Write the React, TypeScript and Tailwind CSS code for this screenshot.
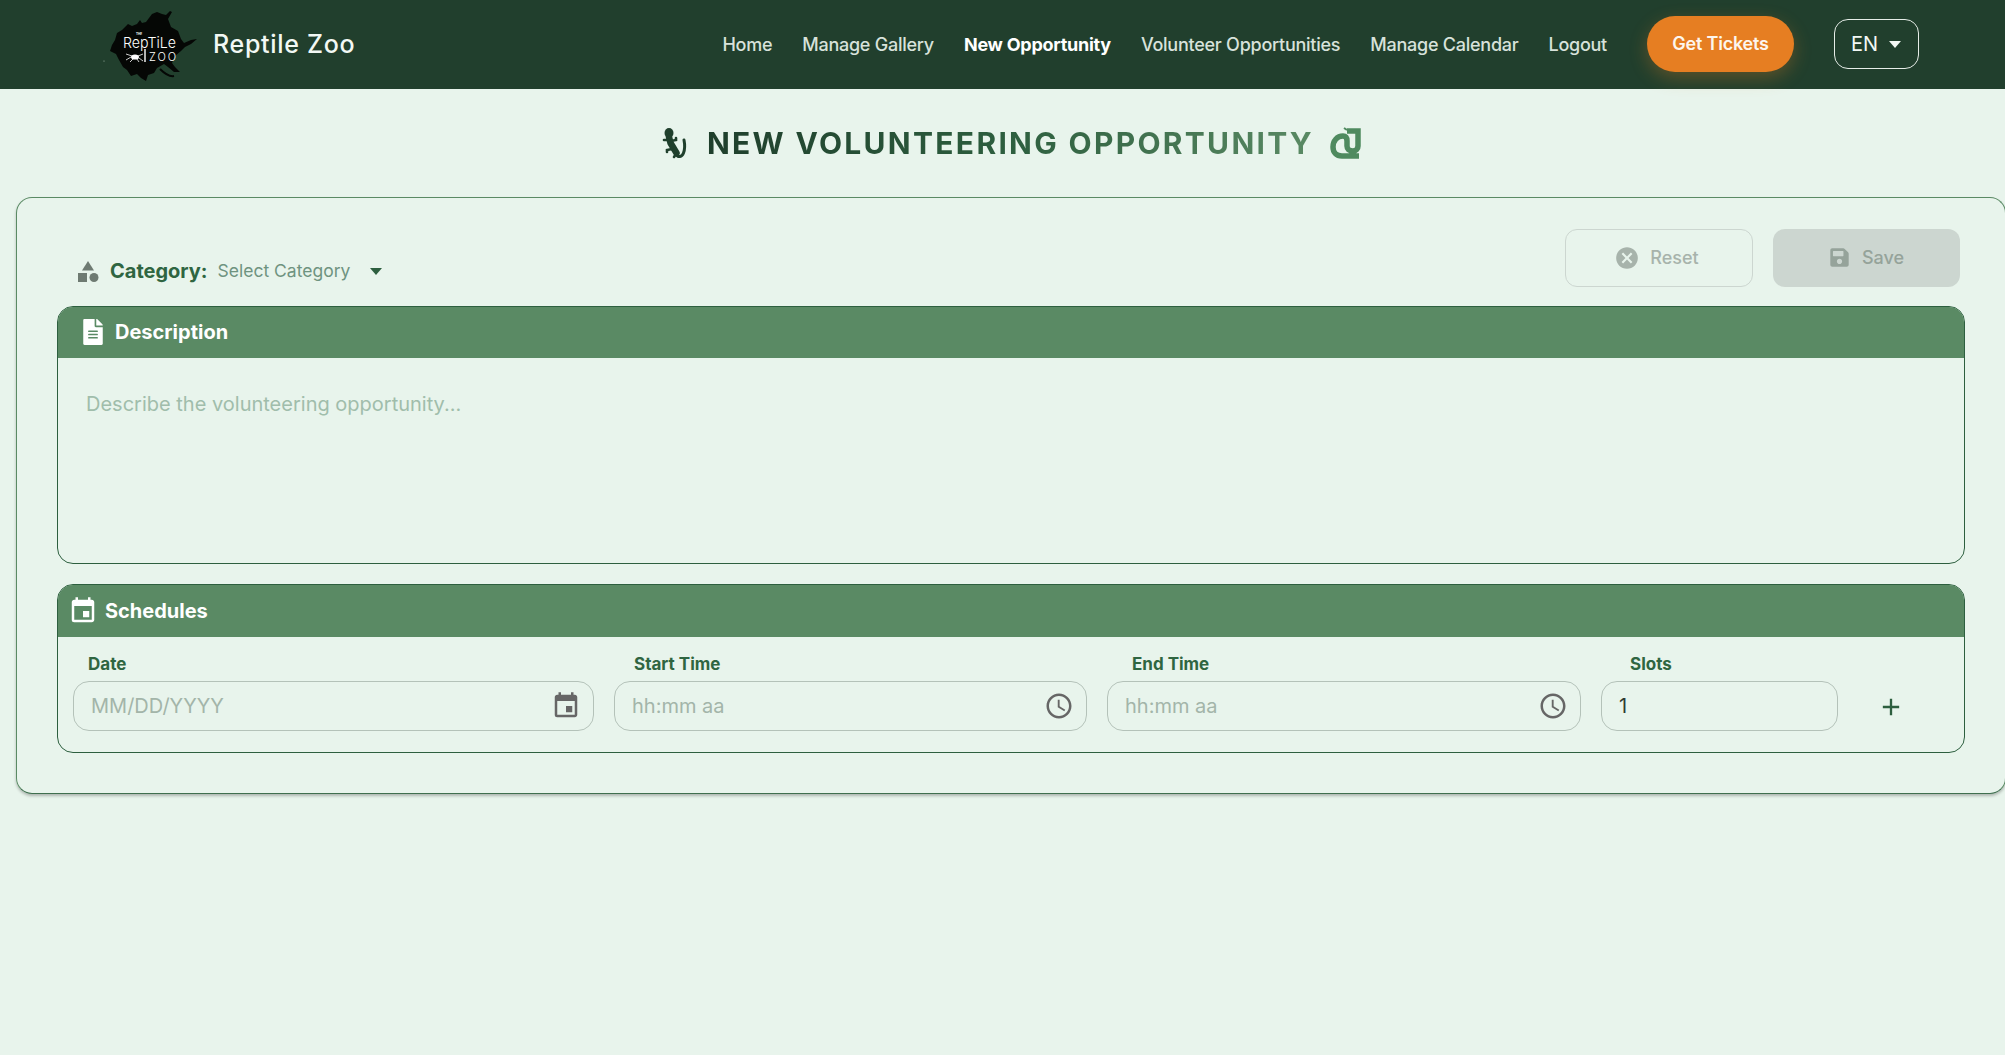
import { FaFileAlt, FaSave } from 'react-icons/fa'
import { MdAccessTime, MdAdd, MdCancel, MdEvent } from 'react-icons/md'

function Caret({ className }: { className: string }) {
  return (
    <svg viewBox="0 0 12 7" className={className} fill="currentColor">
      <path d="M0 0h12L6 7z" />
    </svg>
  )
}

function Logo() {
  return (
    <svg viewBox="100 4 100 80" className="h-[80px] w-[100px] shrink-0">
      <path
        fill="#050705"
        d="M152 13l5-2 5 2 4 1 4-4 2 1-4 7 3 8 7 4 3 8 3 4 7-3 6-1-6 5-6 3-4 4-6 5-3 7 3 4 5 5-6 0-6-5-4-3-7 4-3 5-6 2-2 6-5-3-4-4-6 2-4-6-4-3-4-7-3-6-6-3 2-6 3-5 2-7 5-3 6-6 4 2 5-2 3-4 2 3 4-1z"
      />
      <path d="M160 68c4 4 9 8 14 7" stroke="#050705" strokeWidth="2" fill="none" />
      <circle cx="104" cy="60" r=".6" fill="#9fb5a6" />
      <text x="123" y="47" fill="#fff" fontSize="15" fontWeight="300" fontFamily="Inter, sans-serif" textLength="53" lengthAdjust="spacingAndGlyphs">
        RepTiLe
      </text>
      <text x="136" y="34" fill="#fff" fontSize="3" fontWeight="700" fontFamily="Inter, sans-serif">
        THE
      </text>
      <text x="149" y="60" fill="#fff" fontSize="11" fontWeight="300" fontFamily="Inter, sans-serif" textLength="27">
        ZOO
      </text>
      <path d="M145 48v13" stroke="#fff" strokeWidth="1.4" />
      <ellipse cx="135" cy="56" rx="4" ry="2.6" fill="#fff" />
      <path
        d="M131 56l-5 3M132 55l-6-2M138 55l5-2M139 57l4 3M133 58l-3 3M137 58l2 3"
        stroke="#fff"
        strokeWidth=".8"
        fill="none"
      />
    </svg>
  )
}

function ShapesIcon() {
  return (
    <svg viewBox="0 0 21 21" className="h-[21px] w-[21px] text-[#6e7a72]" fill="currentColor">
      <path d="M10 0l6 9.5H4z" />
      <rect x="0" y="12" width="9" height="9" />
      <circle cx="16" cy="16.5" r="4.5" />
    </svg>
  )
}

function GeckoIcon() {
  return (
    <svg viewBox="660 125 32 36" className="h-[36px] w-[32px]" fill="none" stroke="#1f3f2c" strokeLinecap="round">
      <ellipse cx="670" cy="133" rx="4.5" ry="5" fill="#1f3f2c" stroke="none" />
      <path d="M670 137l1.500 6 3 5 3 5" strokeWidth="6.500" />
      <path d="M677 154c2 4 6 3 7.500-1 1.500-4 1.500-8 .5-13" strokeWidth="3" />
      <path d="M669 140h-4M672 141l5-1v-2M673 149l-5 1v2M677 154l-2 3" strokeWidth="2.600" />
    </svg>
  )
}

function SnakeIcon() {
  return (
    <svg viewBox="1329 125 34 36" className="h-[36px] w-[34px]" fill="none" stroke="#4f8a5f" strokeWidth="5.500">
      <path d="M1358 156h-17c-6 0-9-4-9-9 0-6 4-11 10-11 3 0 4 2 4 5v5c0 3 2 5 6 5 3 0 5-2 5-5v-15h-11" />
      <path d="M1346 130l-3-2" strokeWidth="2" />
    </svg>
  )
}

function Field({ label, labelClass, width, children }: { label: string; labelClass: string; width: string; children: React.ReactNode }) {
  return (
    <div className={width}>
      <div className={`mb-[7px] text-[17px] leading-[20px] font-bold text-[#2f6541] ${labelClass}`}>{label}</div>
      <div className="flex h-[50px] items-center rounded-[16px] border border-[#b4c2b9] pr-[12px] pl-[17px]">{children}</div>
    </div>
  )
}

export default function App() {
  const inputClass =
    'w-full min-w-0 bg-transparent text-[20px] text-[#2f3a33] outline-none placeholder:text-[#a3b5a9]'

  return (
    <div className="min-h-screen w-full overflow-hidden bg-[#e8f4ec] font-[family-name:Inter,sans-serif]">
      <header className="relative flex h-[89px] items-center bg-[#213f2d] pr-[86px] pl-[100px]">
        <Logo />
        <span className="ml-[13px] text-[25px] font-medium tracking-[0.7px] text-[#f2f8f4]">Reptile Zoo</span>
        <nav className="mb-[1px] ml-auto flex items-center gap-[30px] text-[18px] font-medium tracking-[-0.25px] text-[#d8e2db]">
          <a href="#">Home</a>
          <a href="#">Manage Gallery</a>
          <a href="#" className="font-bold text-white">New Opportunity</a>
          <a href="#">Volunteer Opportunities</a>
          <a href="#">Manage Calendar</a>
          <a href="#">Logout</a>
        </nav>
        <button className="mb-[1px] ml-[40px] h-[56px] w-[147px] rounded-full bg-[#e67e22] pb-[1px] text-[18px] font-semibold tracking-[-0.2px] text-[#fdf6ee] shadow-[0_6px_18px_rgba(230,126,34,0.3)]">
          Get Tickets
        </button>
        <button className="mb-[1px] ml-[40px] flex h-[50px] w-[85px] items-center justify-center gap-[10px] rounded-[14px] border border-[#e6ede8] text-[20px] text-[#f2f8f4]">
          EN
          <Caret className="h-[7px] w-[14px]" />
        </button>
      </header>

      <h1 className="flex h-[108px] items-center justify-center gap-[16px] pl-[18px] text-[30px] font-bold tracking-[2.3px]">
        <GeckoIcon />
        <span className="bg-gradient-to-r from-[#1f3f2c] via-[#2d5f3f] to-[#5a8a64] bg-clip-text text-transparent">
          NEW VOLUNTEERING OPPORTUNITY
        </span>
        <SnakeIcon />
      </h1>

      <main className="ml-4 h-[597px] w-[1990px] rounded-[16px] border border-[#5a8a64] border-b-[#3f6f4f] pt-[31px] pr-[40px] pl-[40px] shadow-[0_2px_3px_rgba(0,0,0,0.25)]">
        <div className="flex h-[77px] items-start justify-between pr-[5px] pl-[21px]">
          <div className="flex items-center pt-[27px]">
            <ShapesIcon />
            <span className="ml-[11px] text-[20px] font-bold text-[#2f6541]">Category:</span>
            <span className="ml-[10px] text-[17.5px] text-[#6f9380]">Select Category</span>
            <Caret className="ml-[20px] h-[7px] w-[12px] text-[#2d5f3f]" />
          </div>
          <div className="flex gap-[20px]">
            <button className="flex h-[58px] w-[188px] items-center justify-center gap-[10px] rounded-[12px] border border-[#ccd6d0] pr-[5px] pb-[1px] text-[18px] font-medium text-[#a7b3ab]">
              <MdCancel className="h-[26px] w-[26px]" />
              Reset
            </button>
            <button className="flex h-[58px] w-[187px] items-center justify-center gap-[12px] rounded-[12px] bg-[#ccd6d0] pb-[1px] text-[18px] font-medium text-[#95a39a]">
              <FaSave className="h-[21px] w-[21px]" />
              Save
            </button>
          </div>
        </div>

        <section className="h-[258px] overflow-hidden rounded-[16px] border border-[#2d5f3f]">
          <div className="flex h-[51px] items-center gap-[12px] bg-[#5a8a64] pb-[1px] pl-[25px] text-[20px] font-bold text-white">
            <FaFileAlt className="h-[26px] w-[20px]" />
            Description
          </div>
          <textarea
            placeholder="Describe the volunteering opportunity..."
            className="block h-[205px] w-full resize-none bg-transparent px-[28px] pt-[32px] text-[20px] leading-[28px] outline-none placeholder:text-[#a0bdab]"
          />
        </section>

        <section className="mt-[20px] h-[169px] overflow-hidden rounded-[16px] border border-[#2d5f3f]">
          <div className="flex h-[52px] items-center gap-[7px] bg-[#5a8a64] pb-[1px] pl-[10px] text-[20px] font-bold text-white">
            <MdEvent className="h-[30px] w-[30px]" />
            Schedules
          </div>
          <div className="flex gap-[20px] pt-[17px] pl-[15px]">
            <Field label="Date" labelClass="ml-[15px]" width="w-[521px]">
              <input placeholder="MM/DD/YYYY" className={inputClass} />
              <MdEvent className="h-[30px] w-[30px] shrink-0 text-[#666]" />
            </Field>
            <Field label="Start Time" labelClass="ml-[20px]" width="w-[473px]">
              <input placeholder="hh:mm aa" className={inputClass} />
              <MdAccessTime className="h-[30px] w-[30px] shrink-0 text-[#666]" />
            </Field>
            <Field label="End Time" labelClass="ml-[25px]" width="w-[474px]">
              <input placeholder="hh:mm aa" className={inputClass} />
              <MdAccessTime className="h-[30px] w-[30px] shrink-0 text-[#666]" />
            </Field>
            <Field label="Slots" labelClass="ml-[29px]" width="w-[237px]">
              <input defaultValue="1" className={inputClass} />
            </Field>
            <button className="mt-[28px] ml-[8px] flex h-[50px] w-[50px] items-center justify-center text-[#2d5f3f]">
              <MdAdd className="h-[28px] w-[28px]" />
            </button>
          </div>
        </section>
      </main>
    </div>
  )
}
